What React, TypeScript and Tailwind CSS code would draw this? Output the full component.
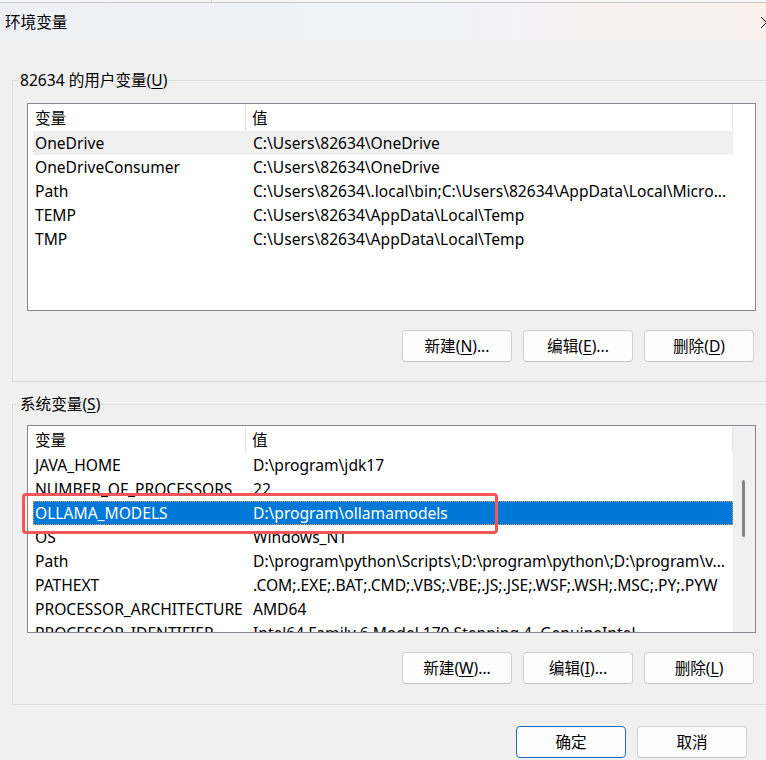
import React from 'react';

type Row = [string, string];

const userRows: Row[] = [
  ['OneDrive', 'C:\\Users\\82634\\OneDrive'],
  ['OneDriveConsumer', 'C:\\Users\\82634\\OneDrive'],
  ['Path', 'C:\\Users\\82634\\.local\\bin;C:\\Users\\82634\\AppData\\Local\\Micro...'],
  ['TEMP', 'C:\\Users\\82634\\AppData\\Local\\Temp'],
  ['TMP', 'C:\\Users\\82634\\AppData\\Local\\Temp'],
];

const systemRows: Row[] = [
  ['JAVA_HOME', 'D:\\program\\jdk17'],
  ['NUMBER_OF_PROCESSORS', '22'],
  ['OLLAMA_MODELS', 'D:\\program\\ollamamodels'],
  ['OS', 'Windows_NT'],
  ['Path', 'D:\\program\\python\\Scripts\\;D:\\program\\python\\;D:\\program\\v...'],
  ['PATHEXT', '.COM;.EXE;.BAT;.CMD;.VBS;.VBE;.JS;.JSE;.WSF;.WSH;.MSC;.PY;.PYW'],
  ['PROCESSOR_ARCHITECTURE', 'AMD64'],
  ['PROCESSOR_IDENTIFIER', 'Intel64 Family 6 Model 170 Stepping 4, GenuineIntel'],
];

interface VarListProps {
  rows: Row[];
  selected: number;
  active?: boolean;
  scrollbar?: boolean;
}

const VarList: React.FC<VarListProps> = ({ rows, selected, active = false, scrollbar = false }) => {
  return (
    <div className="ml-[14px] w-[729px] h-[208px] border border-[#828790] bg-white flex overflow-hidden">
      <div className="flex-1 flex flex-col min-w-0">
        <div className="h-[27px] shrink-0 flex items-stretch border-r border-[#e5e5e5]">
          <div className="w-[218px] pl-[7px] flex items-center border-r border-[#e5e5e5]">变量</div>
          <div className="pl-[6px] flex items-center">值</div>
        </div>
        {rows.map(([name, value], i) => {
          const isSel = i === selected;
          let cls = 'ml-[5px] h-[24px] shrink-0 flex items-center';
          if (isSel && active) {
            cls += ' bg-[#0078d7] text-white outline outline-1 outline-dotted outline-[#d9a35a] -outline-offset-1';
          } else if (isSel) {
            cls += ' bg-[#f0f0f0]';
          }
          return (
            <div key={name} className={cls}>
              <div className="w-[220px] shrink-0 pl-[2px] whitespace-nowrap">{name}</div>
              <div className="flex-1 whitespace-nowrap overflow-hidden">{value}</div>
            </div>
          );
        })}
      </div>
      {scrollbar ? (
        <div className="w-[22px] shrink-0 bg-[#f0f0f0]">
          <div className="mt-[54px] ml-[9px] w-[3px] h-[57px] rounded-full bg-[#858585]" />
        </div>
      ) : (
        <div className="w-[22px] shrink-0 bg-white" />
      )}
    </div>
  );
};

const Btn: React.FC<{ label: string; mn?: string; tail?: string; primary?: boolean }> = ({
  label,
  mn,
  tail = '',
  primary = false,
}) => (
  <button
    className={
      'w-[110px] h-[32px] rounded-[4px] bg-[#fdfdfd] flex items-center justify-center ' +
      (primary ? 'border border-[#2068b8]' : 'border border-[#d0d0d0] border-b-[#c2c2c2]')
    }
  >
    {label}
    {mn && (
      <>
        (<span className="underline underline-offset-2">{mn}</span>){tail}
      </>
    )}
  </button>
);

export default function App() {
  return (
    <div
      className="relative w-[766px] h-[760px] overflow-hidden bg-[#f0f0f0] text-[15.6px] leading-[20px] text-[#000]"
      style={{ fontFamily: '"Noto Sans", "Noto Sans CJK SC", sans-serif' }}
    >
      {/* window behind */}
      <div className="h-[3px] bg-[#f7f7f7] border-b border-[#c3c3c3] flex">
        <div className="ml-[211px] w-px bg-[#d0d0d0]" />
      </div>

      {/* title bar */}
      <div className="h-[37px] flex items-center bg-gradient-to-r from-[#eef0f5] via-[#eff2f9] to-[#f9f0ea]">
        <span className="pl-[5px]">环境变量</span>
        <svg className="ml-auto mr-[-7px] mt-[2px]" width="13" height="13" viewBox="0 0 13 13">
          <path d="M1 1 L12 12 M12 1 L1 12" stroke="#1a1a1a" strokeWidth="1" fill="none" />
        </svg>
      </div>

      <fieldset className="mt-[30px] ml-[12px] w-[760px] border border-[#dcdcdc] pb-[19px]">
        <legend className="ml-[6px] px-[1px] leading-[20px]">
          82634 的用户变量(<span className="underline underline-offset-2">U</span>)
        </legend>
        <div className="mt-[13px]">
          <VarList rows={userRows} selected={0} />
        </div>
        <div className="ml-[14px] w-[727px] mt-[19px] flex justify-end gap-[11px]">
          <Btn label="新建" mn="N" tail="..." />
          <Btn label="编辑" mn="E" tail="..." />
          <Btn label="删除" mn="D" />
        </div>
      </fieldset>

      <fieldset className="mt-[12px] ml-[12px] w-[760px] border border-[#dcdcdc] pb-[20px]">
        <legend className="ml-[6px] px-[1px] leading-[20px]">
          系统变量(<span className="underline underline-offset-2">S</span>)
        </legend>
        <div className="mt-[11px]">
          <VarList rows={systemRows} selected={2} active scrollbar />
        </div>
        <div className="ml-[14px] w-[727px] mt-[19px] flex justify-end gap-[11px]">
          <Btn label="新建" mn="W" tail="..." />
          <Btn label="编辑" mn="I" tail="..." />
          <Btn label="删除" mn="L" />
        </div>
      </fieldset>

      <div className="mt-[21px] pr-[19px] flex justify-end gap-[11px]">
        <Btn label="确定" primary />
        <Btn label="取消" />
      </div>

      {/* annotation */}
      <div className="absolute left-[22px] top-[493px] w-[476px] h-[41px] border-[3px] border-[#f25656] rounded-[4px] pointer-events-none" />
    </div>
  );
}
